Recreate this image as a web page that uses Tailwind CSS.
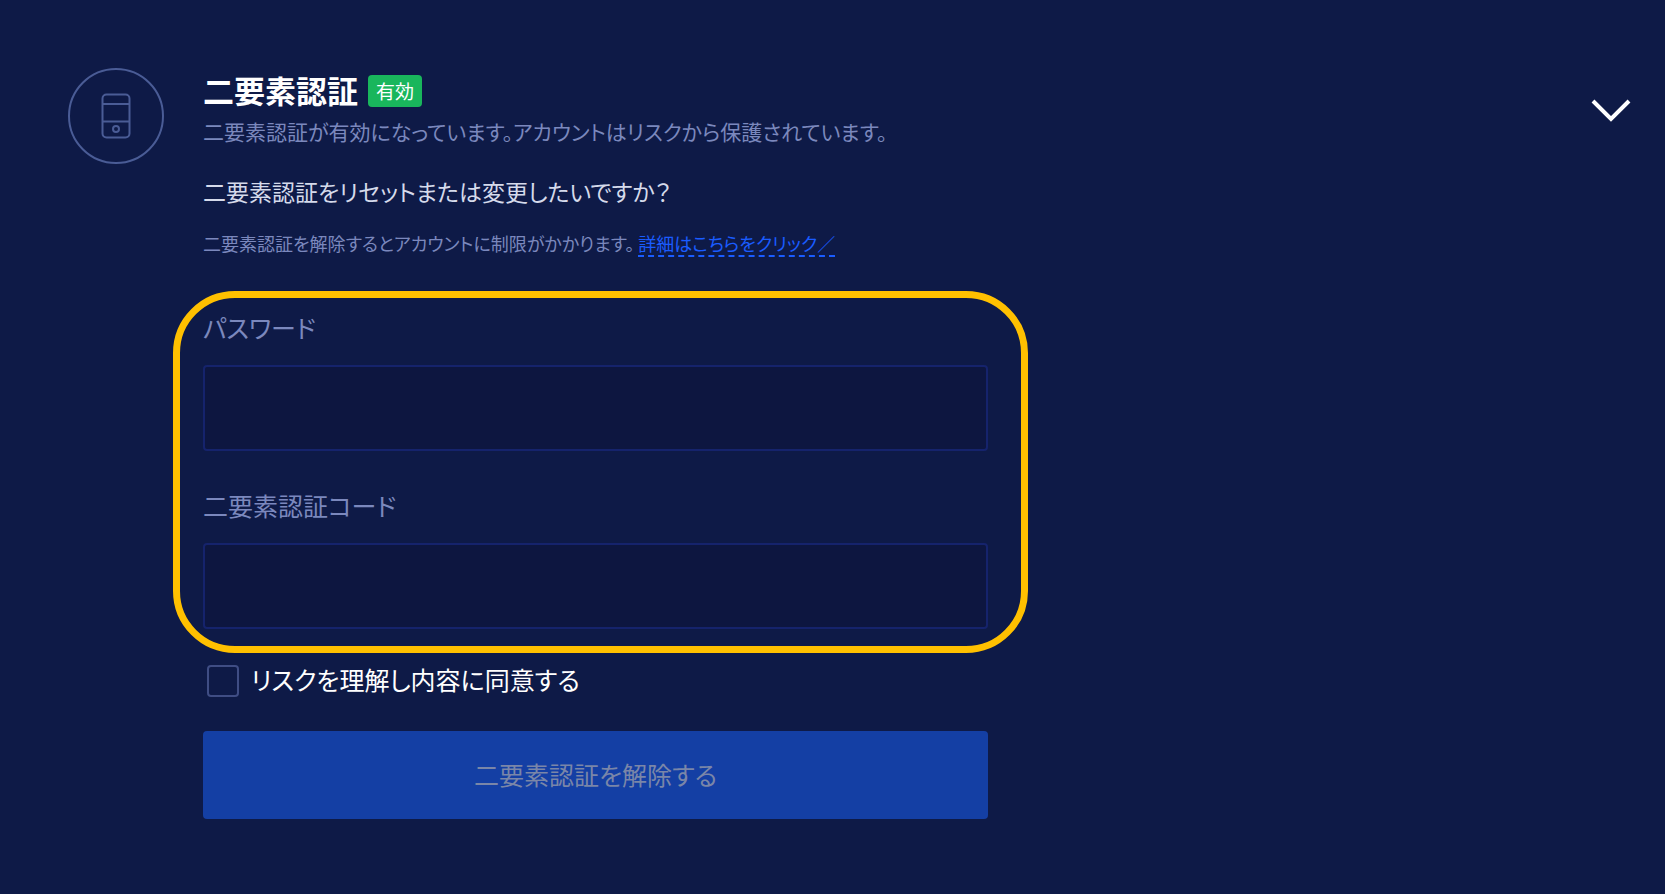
<!DOCTYPE html>
<html lang="ja">
<head>
	<meta charset="UTF-8">
	<meta name="viewport" content="width=device-width, initial-scale=1.0">
	<title>二要素認証</title>
	<script src="https://cdn.jsdelivr.net/npm/@tailwindcss/browser@4"></script>
</head>
<body class="bg-[#0e1a47] font-['Noto_Sans_CJK_JP',sans-serif] [font-feature-settings:'palt']">
	<main class="flex items-start gap-[39px] min-h-screen pt-[68px] pl-[68px] pr-[32px]">
		<div class="size-24 shrink-0 rounded-full border-2 border-[#4a5c96] flex items-center justify-center">
			<svg class="w-[30px] h-[46px] text-[#4a5c96]" viewBox="0 0 30 46" fill="none" stroke="currentColor" stroke-width="2">
				<rect x="1.5" y="1.5" width="27" height="43" rx="4"/>
				<path d="M2 11h26M2 28.5h26"/>
				<circle cx="15" cy="36" r="3"/>
			</svg>
		</div>
		<div class="grow min-w-0">
			<div class="flex items-center gap-2.5 h-11">
				<h1 class="text-[31px] leading-11 font-bold text-white">二要素認証</h1>
				<span class="mt-0.5 h-8 px-2 rounded bg-[#19b65c] text-white text-[19px] leading-8">有効</span>
			</div>
			<p class="mt-[3px] text-[21px] leading-8 text-[#7b88bd]">二要素認証が有効になっています。アカウントはリスクから保護されています。</p>
			<h2 class="mt-6 text-[23px] leading-10 text-[#d5daeb]">二要素認証をリセットまたは変更したいですか？</h2>
			<p class="mt-4 text-[18px] leading-8 text-[#7b88bd]">
				二要素認証を解除するとアカウントに制限がかかります。
				<a href="#" class="inline-block leading-6 text-[#1a5cff] border-b-2 border-dashed border-[#1a5cff]">詳細はこちらをクリック／</a>
			</p>
			<form class="w-full max-w-[785px] mt-[50px]">
				<div class="relative">
					<label for="password" class="block text-[25px] leading-9 text-[#7b88bd]">パスワード</label>
					<input type="password" id="password" name="password" class="block w-full h-[86px] mt-5 px-5 rounded-sm border-2 border-[#15236c] bg-[#0d1640] text-white text-[25px]">
					<label for="code" class="block mt-9 text-[25px] leading-9 text-[#7b88bd]">二要素認証コード</label>
					<input type="text" id="code" name="code" class="block w-full h-[86px] mt-5 px-5 rounded-sm border-2 border-[#15236c] bg-[#0d1640] text-white text-[25px]">
					<div class="absolute -top-[18px] -bottom-6 -left-[30px] -right-10 rounded-[62px] border-7 border-[#ffc000] pointer-events-none"></div>
				</div>
				<div class="flex items-center gap-3 mt-8 pl-1">
					<input type="checkbox" id="agree" class="appearance-none size-8 rounded border-2 border-[#3f4d84] checked:bg-[#1a5cff]">
					<label for="agree" class="pb-1 text-[25px] leading-9 text-white">リスクを理解し内容に同意する</label>
				</div>
				<button type="submit" disabled class="w-full h-[88px] mt-[30px] rounded bg-[#143fa4] text-[#7a86a8] text-[25px]">二要素認証を解除する</button>
			</form>
		</div>
		<button type="button" aria-label="閉じる" class="shrink-0 mt-7">
			<svg class="w-11 h-7" viewBox="0 0 44 28" fill="none" stroke="#fff" stroke-width="4">
				<path d="M4 5l18 18L40 5"/>
			</svg>
		</button>
	</main>
</body>
</html>
